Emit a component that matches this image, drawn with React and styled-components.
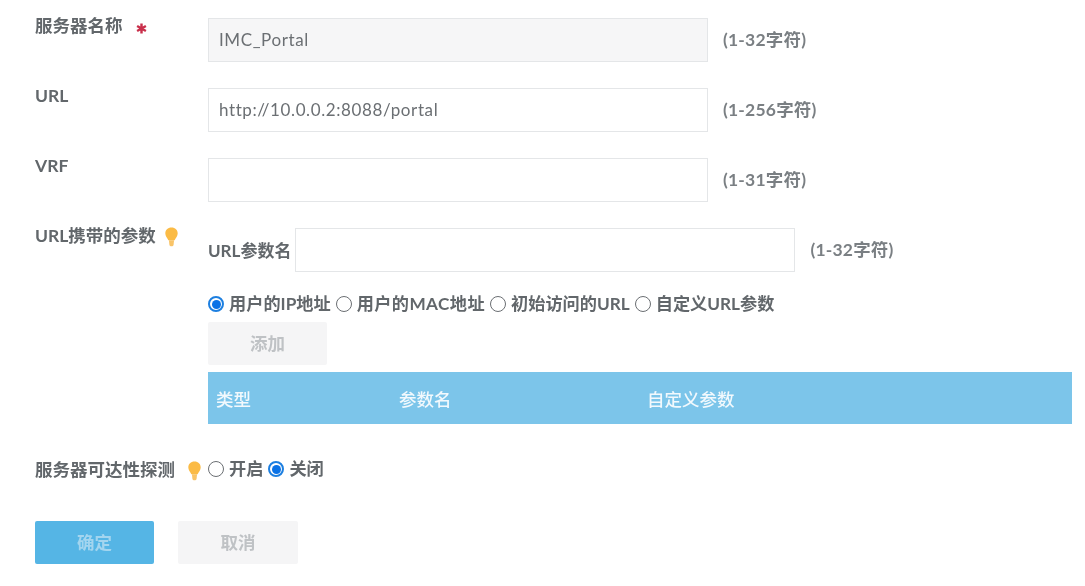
import React from 'react';
import styled, { createGlobalStyle } from 'styled-components';

const GlobalStyle = createGlobalStyle`
    html, body {
        margin: 0;
        padding: 0;
        background: #fff;
    }
    body {
        font-family: Lato, "Noto Sans CJK SC", sans-serif;
        font-size: 17.5px;
        color: #62676b;
    }
`;

const Page = styled.form`
    width: 1085px;
    height: 586px;
    box-sizing: border-box;
    padding: 18px 13px 0 35px;
    display: flex;
    flex-direction: column;
    filter: blur(0.35px);
`;

const Row = styled.div`
    display: flex;
    align-items: flex-start;
    margin-bottom: ${ props => props.$gap ?? 26 }px;
`;

const Label = styled.div`
    width: 173px;
    flex: none;
    display: flex;
    align-items: flex-start;
    font-weight: 700;
    line-height: 15px;
    margin-top: ${ props => props.$top ?? 0 }px;
`;

const Field = styled.div`
    display: flex;
    align-items: center;
`;

const TextBox = styled.div`
    width: 500px;
    height: 44px;
    box-sizing: border-box;
    border: 1px solid #e4e6e8;
    background: ${ props => props.$disabled ? '#f6f6f7' : '#fff' };
    padding: 0 10px 2px;
    display: flex;
    align-items: center;
    font-size: 17px;
    font-weight: 400;
    color: #6b6f73;
    letter-spacing: 0.6px;
`;

const Hint = styled.span`
    margin: 0 0 3px 15px;
    font-size: 17.5px;
    font-weight: 700;
    letter-spacing: 0.2px;
    color: #7a7f83;
`;

const Body = styled.div`
    flex: 1;
    min-width: 0;
`;

const ParamLabel = styled.span`
    font-size: 17px;
    font-weight: 700;
    margin: 0 4px 2px 0;
    white-space: nowrap;
`;

const RadioRow = styled.div`
    display: flex;
    align-items: center;
    height: 18px;
    margin-top: ${ props => props.$top ?? 0 }px;
    white-space: nowrap;
`;

const RadioItem = styled.span`
    display: inline-flex;
    align-items: center;
    margin-right: 5px;
    font-size: 17.2px;
    font-weight: 700;
    letter-spacing: ${ props => props.$spread ?? 0 }px;
`;

const RadioText = styled.span`
    margin-bottom: 3px;
`;

const Dot = styled.span`
    width: 16px;
    height: 16px;
    box-sizing: border-box;
    border-radius: 50%;
    border: ${ props => props.$on ? '2px solid #1d7fe0' : '1.2px solid #6a6e72' };
    margin-right: 5px;
    display: inline-flex;
    align-items: center;
    justify-content: center;
    &::after {
        content: '';
        display: ${ props => props.$on ? 'block' : 'none' };
        width: 9px;
        height: 9px;
        border-radius: 50%;
        background: #0a72e6;
    }
`;

const Button = styled.button`
    width: ${ props => props.$width ?? 119 }px;
    height: 43px;
    border: 0;
    border-radius: 2px;
    padding: 0 0 2px;
    font: inherit;
    font-weight: 700;
    font-size: 17.5px;
    background: ${ props => props.$primary ? '#55b5e5' : '#f5f5f6' };
    color: ${ props => props.$primary ? '#a3d5ef' : '#bfc2c5' };
`;

const AddButton = styled(Button)`
    display: block;
    margin-top: 9px;
`;

const Table = styled.div`
    margin-top: 7px;
    height: 52px;
    background: #7cc5ea;
    color: #f2f9fd;
    font-weight: 500;
    display: grid;
    grid-template-columns: 183px 248px 1fr;
    align-items: center;
    padding-left: 8px;
`;

const Actions = styled.div`
    display: flex;
    gap: 24px;
    margin-top: 40px;
`;

const StarIcon = styled.svg`
    width: 11px;
    height: 11px;
    margin: 5px 0 0 13px;
    flex: none;
`;

const BulbIcon = styled.svg`
    width: 15px;
    height: 20px;
    margin: -1px 0 0 ${ props => props.$left }px;
    flex: none;
`;

const Star = () => (
    <StarIcon viewBox="0 0 10 10">
        <path d="M5 0.5v9M1 2.7l8 4.6M9 2.7l-8 4.6" stroke="#c9304b" strokeWidth="2.2" />
    </StarIcon>
);

const Bulb = ({ left }) => (
    <BulbIcon $left={ left } viewBox="0 0 15 21">
        <path d="M7.5 0.5C3.6 0.5 1 3.2 1 6.7c0 2.8 2 4.4 3.2 7.3h6.6C12 11.1 14 9.5 14 6.7 14 3.2 11.4 0.5 7.5 0.5z" fill="#fbbb45" />
        <path d="M4.8 14h5.4l-.5 4.6c-.2 1.1-1 1.7-2.2 1.7s-2-.6-2.2-1.7z" fill="#f9c468" />
    </BulbIcon>
);

const Radio = ({ on, spread, children }) => (
    <RadioItem $spread={ spread }>
        <Dot $on={ on } />
        <RadioText>{ children }</RadioText>
    </RadioItem>
);

export default function App() {
    return (
        <Page>
            <GlobalStyle />
            <Row>
                <Label>服务器名称<Star /></Label>
                <Field>
                    <TextBox $disabled>IMC_Portal</TextBox>
                    <Hint>(1-32字符)</Hint>
                </Field>
            </Row>
            <Row>
                <Label>URL</Label>
                <Field>
                    <TextBox>http://10.0.0.2:8088/portal</TextBox>
                    <Hint>(1-256字符)</Hint>
                </Field>
            </Row>
            <Row>
                <Label>VRF</Label>
                <Field>
                    <TextBox />
                    <Hint>(1-31字符)</Hint>
                </Field>
            </Row>
            <Row $gap={ 36 }>
                <Label>URL携带的参数<Bulb left={ 8 } /></Label>
                <Body>
                    <Field>
                        <ParamLabel>URL参数名</ParamLabel>
                        <TextBox />
                        <Hint>(1-32字符)</Hint>
                    </Field>
                    <RadioRow $top={ 23 }>
                        <Radio on>用户的IP地址</Radio>
                        <Radio spread={ 0.4 }>用户的MAC地址</Radio>
                        <Radio>初始访问的URL</Radio>
                        <Radio>自定义URL参数</Radio>
                    </RadioRow>
                    <AddButton type="button">添加</AddButton>
                    <Table>
                        <span>类型</span>
                        <span>参数名</span>
                        <span>自定义参数</span>
                    </Table>
                </Body>
            </Row>
            <Row $gap={ 0 }>
                <Label $top={ 2 }>服务器可达性探测<Bulb left={ 12 } /></Label>
                <RadioRow>
                    <Radio>开启</Radio>
                    <Radio on>关闭</Radio>
                </RadioRow>
            </Row>
            <Actions>
                <Button type="button" $primary>确定</Button>
                <Button type="button" $width={ 120 }>取消</Button>
            </Actions>
        </Page>
    );
}
